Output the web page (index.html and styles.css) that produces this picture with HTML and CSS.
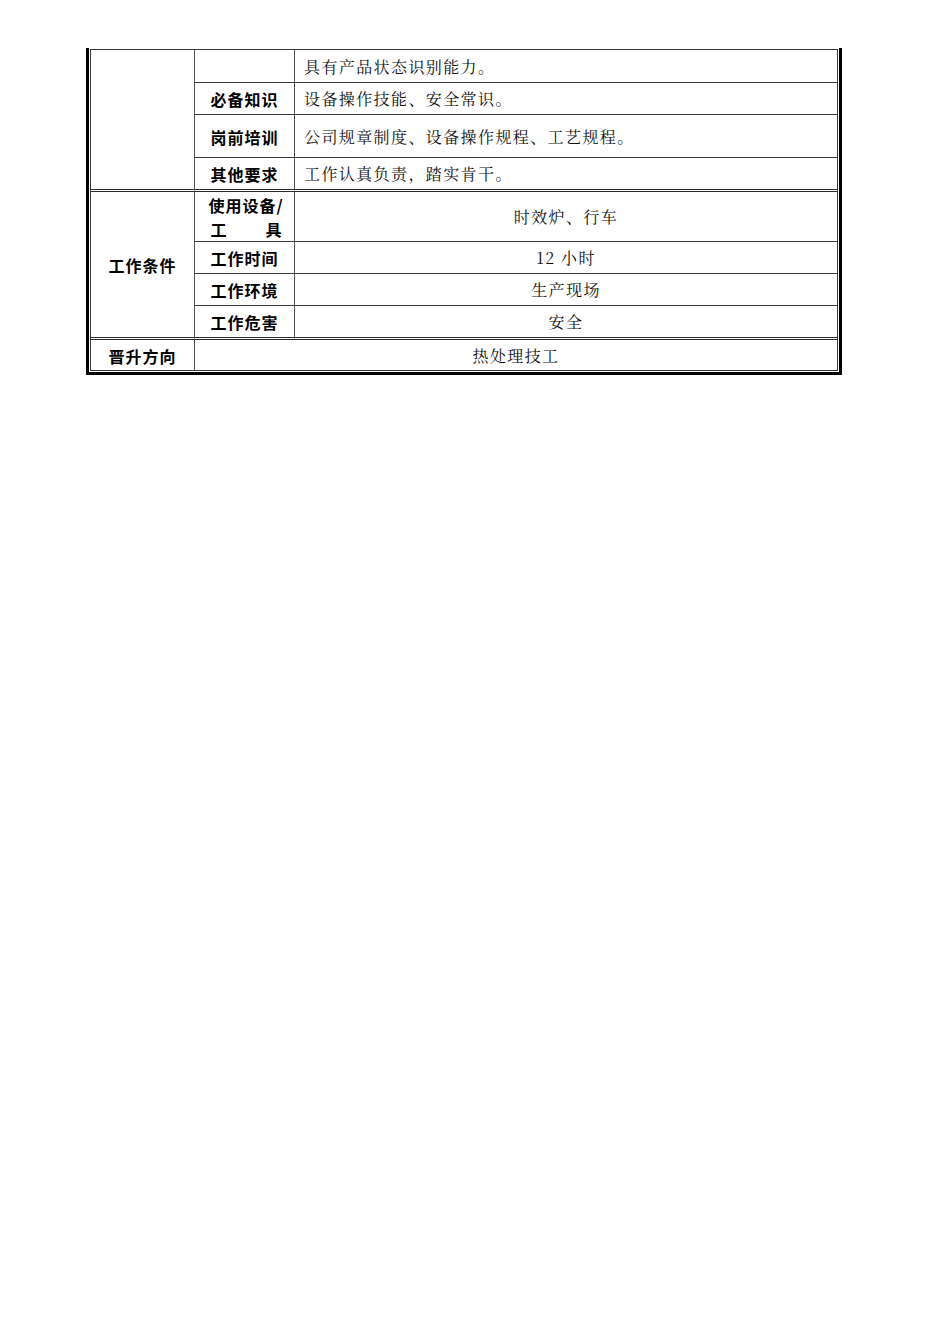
FILE: index.html
```html
<!DOCTYPE html>
<html lang="zh-CN">
<head>
<meta charset="utf-8">
<title>岗位说明书</title>
<link rel="stylesheet" href="styles.css">
</head>
<body>
<div class="sheet">
  <div class="grid">
    <div class="cell c1 span4 end"></div>
    <div class="cell c2"></div>
    <div class="cell c3 left">具有产品状态识别能力。</div>

    <div class="cell c2 label">必备知识</div>
    <div class="cell c3 left">设备操作技能、安全常识。</div>

    <div class="cell c2 label">岗前培训</div>
    <div class="cell c3 left">公司规章制度、设备操作规程、工艺规程。</div>

    <div class="cell c2 label end">其他要求</div>
    <div class="cell c3 left end">工作认真负责，踏实肯干。</div>

    <div class="cell c1 span4 label end">工作条件</div>
    <div class="cell c2 label two">
      <span class="line">使用设备/</span>
      <span class="line spread"><span>工</span><span>具</span></span>
    </div>
    <div class="cell c3 center">时效炉、行车</div>

    <div class="cell c2 label">工作时间</div>
    <div class="cell c3 center">12 小时</div>

    <div class="cell c2 label">工作环境</div>
    <div class="cell c3 center">生产现场</div>

    <div class="cell c2 label end">工作危害</div>
    <div class="cell c3 center end">安全</div>

    <div class="cell c1 label last">晋升方向</div>
    <div class="cell c23 center last">热处理技工</div>
  </div>
</div>
</body>
</html>
```

FILE: styles.css
```css
html, body {
  margin: 0;
  padding: 0;
  background: #ffffff;
}

body {
  font-family: "Noto Serif CJK SC", "Liberation Serif", "Noto Sans CJK SC", serif;
  color: #111;
}

.sheet {
  box-sizing: border-box;
  width: 756px;
  margin: 48px 0 0 86px;
  padding: 1px;
  border: 3px solid #000;
  border-top: 0;
}

.grid {
  display: grid;
  grid-template-columns: 104px 100px 542px;
  grid-template-rows: 33px 32px 43px 34px 50px 32px 32px 34px 30px;
  border: 1px solid #3a3a3a;
}

.cell {
  box-sizing: border-box;
  display: flex;
  align-items: center;
  border-bottom: 1px solid #3a3a3a;
  font-size: 16px;
  letter-spacing: 1.4px;
  line-height: 20px;
  white-space: nowrap;
  padding-top: 1px;
}

.c1, .c2 {
  border-right: 1px solid #555;
}

.c1 { grid-column: 1; }
.c2 { grid-column: 2; }
.c3 { grid-column: 3; }
.c23 { grid-column: 2 / span 2; }

.span4 { grid-row: span 4; }

.end {
  border-bottom: 3px double #2a2a2a;
}

.last {
  border-bottom: 0;
}

.label {
  justify-content: center;
  font-family: "Noto Sans CJK SC", "Liberation Sans", sans-serif;
  font-weight: 700;
  color: #000;
  letter-spacing: 1px;
}

.left {
  justify-content: flex-start;
  padding-left: 9px;
}

.center {
  justify-content: center;
}

.two {
  flex-direction: column;
  justify-content: center;
  align-items: center;
  line-height: 24px;
  padding-left: 3px;
}

.line {
  display: block;
}

.spread {
  display: flex;
  justify-content: space-between;
  width: 71px;
  letter-spacing: 0;
}
```
